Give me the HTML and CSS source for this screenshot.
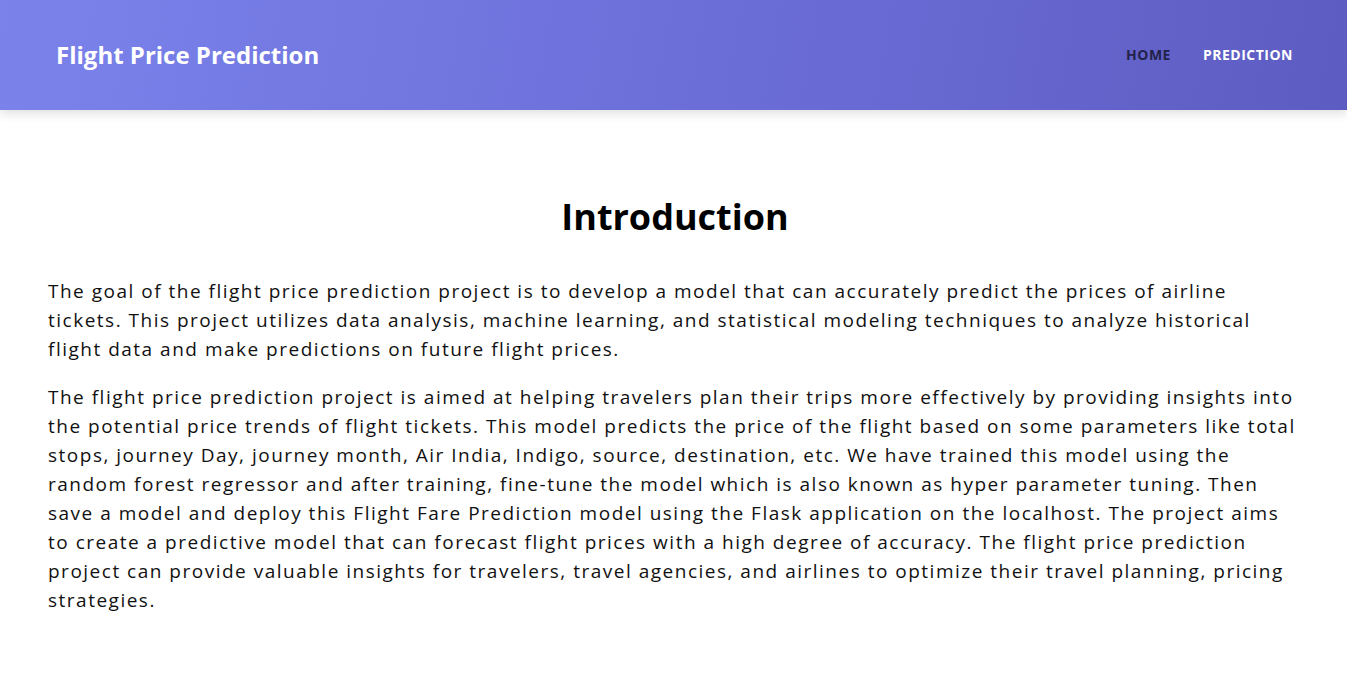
FILE: index.html
```html
<!DOCTYPE html>
<html lang="en">
<head>
<meta charset="utf-8">
<title>Flight Price Prediction</title>
<link rel="stylesheet" href="styles.css">
</head>
<body>
<header class="topbar">
  <div class="brand">Flight Price Prediction</div>
  <nav class="nav">
    <a class="nav-link nav-active" href="#">HOME</a>
    <a class="nav-link" href="#">PREDICTION</a>
  </nav>
</header>
<main class="content">
  <h1 class="title">Introduction</h1>
  <p class="para">The goal of the flight price prediction project is to develop a model that can accurately predict the prices of airline tickets. This project utilizes data analysis, machine learning, and statistical modeling techniques to analyze historical flight data and make predictions on future flight prices.</p>
  <p class="para">The flight price prediction project is aimed at helping travelers plan their trips more effectively by providing insights into the potential price trends of flight tickets. This model predicts the price of the flight based on some parameters like total stops, journey Day, journey month, Air India, Indigo, source, destination, etc. We have trained this model using the random forest regressor and after training, fine-tune the model which is also known as hyper parameter tuning. Then save a model and deploy this Flight Fare Prediction model using the Flask application on the localhost. The project aims to create a predictive model that can forecast flight prices with a high degree of accuracy. The flight price prediction project can provide valuable insights for travelers, travel agencies, and airlines to optimize their travel planning, pricing strategies.</p>
</main>
</body>
</html>
```
FILE: styles.css
```css
* { box-sizing: border-box; }
html, body { margin: 0; padding: 0; background: #ffffff; }
body { font-family: "Open Sans", "DejaVu Sans", sans-serif; color: #111; }

.topbar {
  height: 110px;
  display: flex;
  align-items: center;
  justify-content: space-between;
  padding: 0 54px 0 56px;
  background: linear-gradient(100deg, #7b83eb 0%, #6d6fd9 50%, #5d5cc2 100%);
  box-shadow: 0 4px 10px rgba(0,0,0,0.12);
}
.brand {
  color: #fff;
  font-size: 24px;
  font-weight: 700;
  letter-spacing: 0;
  padding-bottom: 2px;
}
.nav { display: flex; gap: 32px; padding-bottom: 2px; }
.nav-link {
  color: #fff;
  font-size: 14px;
  font-weight: 700;
  letter-spacing: 0.5px;
  text-decoration: none;
}
.nav-active { color: #22234a; }

.content { padding: 77px 45px 40px 48px; }
.title {
  margin: 0 0 30px;
  text-align: center;
  font-size: 36px;
  font-weight: 700;
  color: #000;
  line-height: 60px;
}
.para {
  margin: 0 0 19px;
  font-size: 19px;
  line-height: 29px;
  letter-spacing: 1.5px;
  color: #111;
}
```
